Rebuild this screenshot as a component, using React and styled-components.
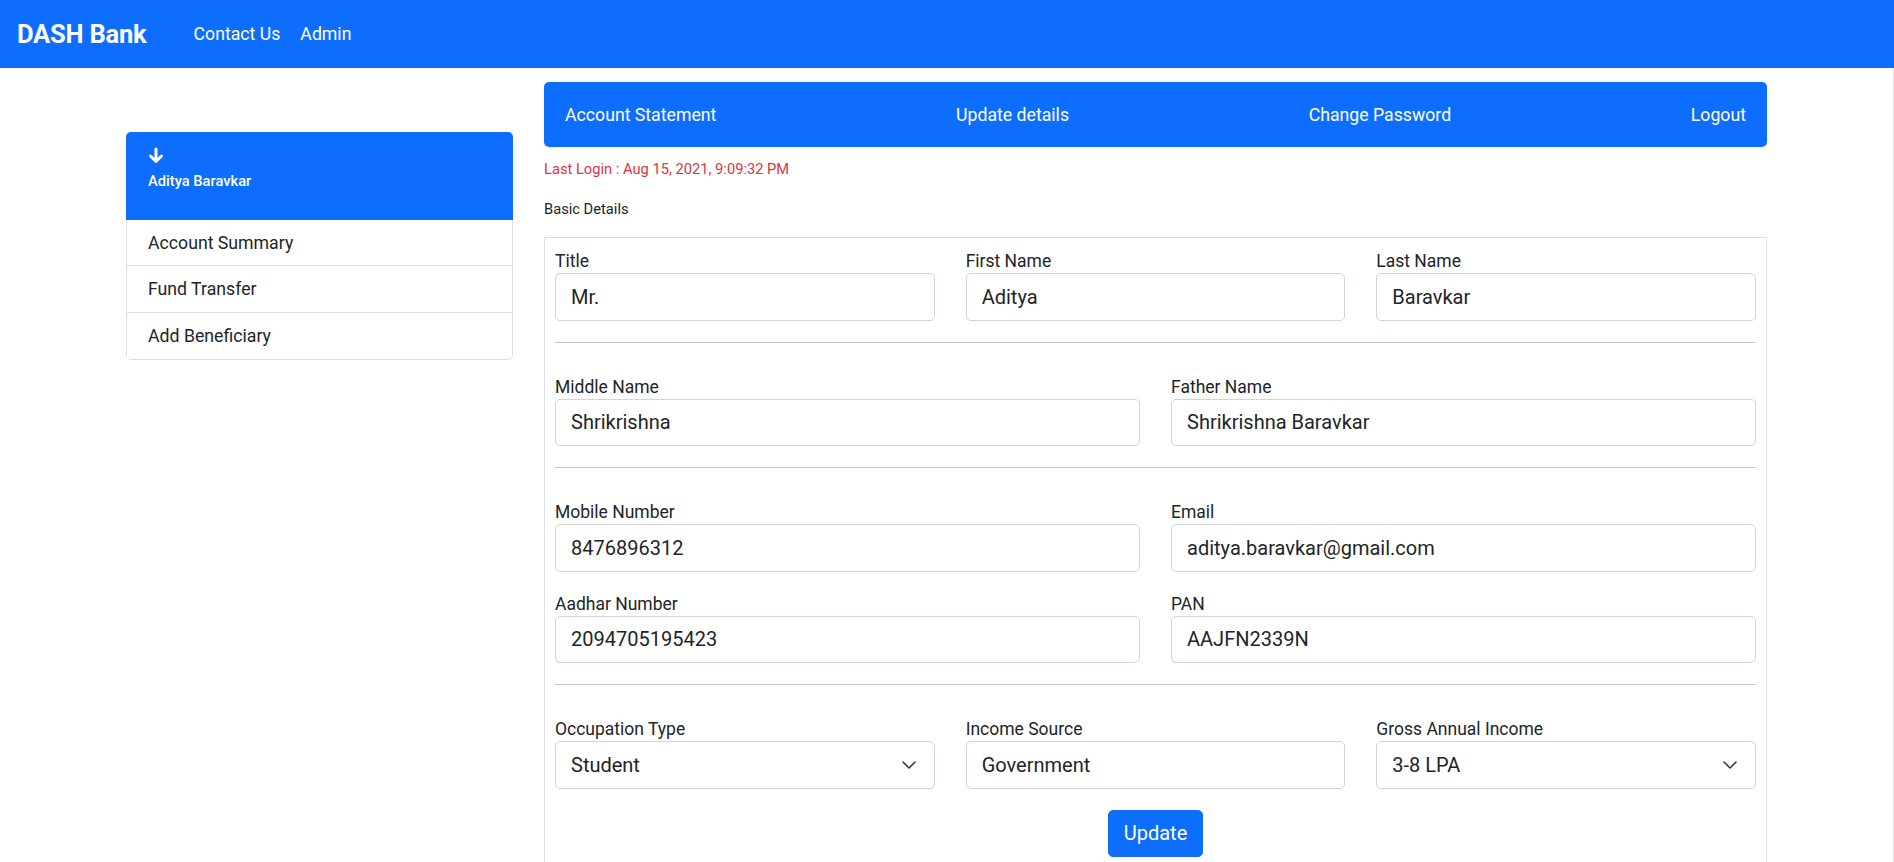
import React from "react";
import styled, { createGlobalStyle } from "styled-components";

const GlobalStyle = createGlobalStyle`
  *, *::before, *::after { box-sizing: border-box; }
  body {
    margin: 0;
    font-family: Roboto, "Liberation Sans", Arial, sans-serif;
    color: #212529;
    background: #fff;
  }
`;

const Navbar = styled.nav`
  height: 68px;
  background: #0d6efd;
  display: flex;
  align-items: center;
  padding-left: 17px;
`;

const Brand = styled.a`
  font-size: 25.5px;
  font-weight: 700;
  color: #fff;
  margin-right: 37px;
  letter-spacing: -0.2px;
`;

const NavLink = styled.a`
  font-size: 17.7px;
  color: #fff;
  padding: 0 10px;
`;

const Page = styled.div`
  display: grid;
  grid-template-columns: 387px 1223px;
  column-gap: 31px;
  justify-content: center;
  align-items: start;
  border-right: 1px solid #e4e4e4;
  min-height: calc(100vh - 68px);
`;

const Sidebar = styled.aside`
  margin-top: 64px;
  border-radius: 5px;
  overflow: hidden;
`;

const SideHeader = styled.div`
  height: 88px;
  background: #0d6efd;
  color: #fff;
  padding: 15px 22px 0;
`;

const ArrowIcon = styled.svg`
  display: block;
  margin-bottom: 7px;
`;

const UserName = styled.div`
  font-size: 14.7px;
  line-height: 21px;
  font-weight: 500;
`;

const SideList = styled.ul`
  list-style: none;
  margin: 0;
  padding: 0;
  border: 1px solid #dcdee0;
  border-top: none;
  border-radius: 0 0 5px 5px;
`;

const SideItem = styled.li`
  height: 46.3px;
  display: flex;
  align-items: center;
  padding: 0 21px;
  font-size: 17.7px;
  color: #212529;
  border-bottom: ${(p) => (p.$last ? "none" : "1px solid #dcdee0")};
`;

const Main = styled.main`
  margin-top: 14px;
`;

const Tabs = styled.div`
  height: 65px;
  background: #0d6efd;
  border-radius: 5px;
  padding: 0 21px 0 21px;
  display: flex;
  align-items: center;
  justify-content: space-between;
`;

const Tab = styled.a`
  font-size: 17.7px;
  color: #fff;
`;

const SmallText = styled.div`
  font-size: 14.7px;
  line-height: 21px;
  margin-top: ${(p) => p.$mt}px;
  color: ${(p) => p.$color || "#212529"};
`;

const FormCard = styled.form`
  margin-top: 17px;
  border: 1px solid #e0e0e0;
  padding: 12px 10px 20px;
`;

const Row = styled.div`
  display: grid;
  grid-template-columns: repeat(${(p) => p.$cols}, 1fr);
  column-gap: 31px;
`;

const Field = styled.div`
  margin-bottom: 21px;
`;

const Label = styled.label`
  display: block;
  font-size: 17.5px;
  line-height: 23px;
  color: #212529;
`;

const Input = styled.input`
  display: block;
  width: 100%;
  height: 47.5px;
  padding: 0 15px;
  font-family: Roboto, "Liberation Sans", Arial, sans-serif;
  font-size: 20px;
  color: #212529;
  border: 1px solid #ced4da;
  border-radius: 5px;
  background: #fff;
  outline: none;
`;

const SelectWrap = styled.div`
  position: relative;
`;

const Select = styled.select`
  display: block;
  width: 100%;
  height: 47.5px;
  padding: 0 40px 0 15px;
  font-family: Roboto, "Liberation Sans", Arial, sans-serif;
  font-size: 20px;
  color: #212529;
  border: 1px solid #ced4da;
  border-radius: 5px;
  background: #fff;
  appearance: none;
  -webkit-appearance: none;
  outline: none;
`;

const Chevron = styled.svg`
  position: absolute;
  right: 18px;
  top: 18px;
  pointer-events: none;
`;

const Divider = styled.hr`
  border: none;
  height: 1px;
  background: #c8c9ca;
  margin: 0 0 33px;
`;

const ButtonRow = styled.div`
  display: flex;
  justify-content: center;
`;

const Button = styled.button`
  height: 47.5px;
  padding: 0 15px;
  font-family: Roboto, "Liberation Sans", Arial, sans-serif;
  font-size: 20px;
  color: #fff;
  background: #0d6efd;
  border: 1px solid #0d6efd;
  border-radius: 5px;
`;

const TextField = ({ label, value }) => (
  <Field>
    <Label>{label}</Label>
    <Input defaultValue={value} readOnly />
  </Field>
);

const SelectField = ({ label, value, options }) => (
  <Field>
    <Label>{label}</Label>
    <SelectWrap>
      <Select defaultValue={value}>
        {options.map((o) => (
          <option key={o}>{o}</option>
        ))}
      </Select>
      <Chevron width="16" height="12" viewBox="0 0 16 12">
        <path d="M2 3l6 6 6-6" fill="none" stroke="#343a40" strokeWidth="1.6" strokeLinecap="round" strokeLinejoin="round" />
      </Chevron>
    </SelectWrap>
  </Field>
);

export default function App() {
  return (
    <>
      <GlobalStyle />
      <Navbar>
        <Brand>DASH Bank</Brand>
        <NavLink>Contact Us</NavLink>
        <NavLink>Admin</NavLink>
      </Navbar>
      <Page>
        <Sidebar>
          <SideHeader>
            <ArrowIcon width="16" height="17" viewBox="0 0 16 17">
              <path d="M8 2v12.5M2.5 9l5.5 5.5 5.5-5.5" fill="none" stroke="#fff" strokeWidth="3" strokeLinecap="round" strokeLinejoin="round" />
            </ArrowIcon>
            <UserName>Aditya Baravkar</UserName>
          </SideHeader>
          <SideList>
            <SideItem>Account Summary</SideItem>
            <SideItem>Fund Transfer</SideItem>
            <SideItem $last>Add Beneficiary</SideItem>
          </SideList>
        </Sidebar>
        <Main>
          <Tabs>
            <Tab>Account Statement</Tab>
            <Tab>Update details</Tab>
            <Tab>Change Password</Tab>
            <Tab>Logout</Tab>
          </Tabs>
          <SmallText $mt={12} $color="#dc3545">Last Login : Aug 15, 2021, 9:09:32 PM</SmallText>
          <SmallText $mt={19}>Basic Details</SmallText>
          <FormCard onSubmit={(e) => e.preventDefault()}>
            <Row $cols={3}>
              <TextField label="Title" value="Mr." />
              <TextField label="First Name" value="Aditya" />
              <TextField label="Last Name" value="Baravkar" />
            </Row>
            <Divider />
            <Row $cols={2}>
              <TextField label="Middle Name" value="Shrikrishna" />
              <TextField label="Father Name" value="Shrikrishna Baravkar" />
            </Row>
            <Divider />
            <Row $cols={2}>
              <TextField label="Mobile Number" value="8476896312" />
              <TextField label="Email" value="aditya.baravkar@gmail.com" />
              <TextField label="Aadhar Number" value="2094705195423" />
              <TextField label="PAN" value="AAJFN2339N" />
            </Row>
            <Divider />
            <Row $cols={3}>
              <SelectField label="Occupation Type" value="Student" options={["Student", "Salaried", "Self Employed", "Retired"]} />
              <TextField label="Income Source" value="Government" />
              <SelectField label="Gross Annual Income" value="3-8 LPA" options={["0-3 LPA", "3-8 LPA", "8-15 LPA", "15+ LPA"]} />
            </Row>
            <ButtonRow>
              <Button type="submit">Update</Button>
            </ButtonRow>
          </FormCard>
        </Main>
      </Page>
    </>
  );
}
